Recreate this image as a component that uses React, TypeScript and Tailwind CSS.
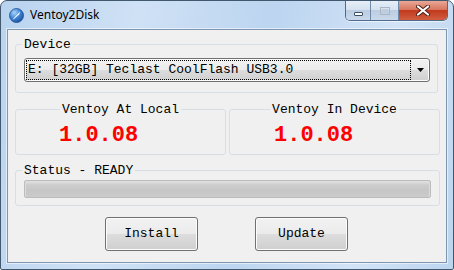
import React from "react";

const mono = "font-['Liberation_Mono','Courier_New',monospace]";
const btnFace =
  "bg-[linear-gradient(#f2f2f2_0%,#ebebeb_49%,#dddddd_50%,#cfcfcf_100%)] shadow-[inset_0_0_0_1px_#fcfcfc]";

function AppIcon() {
  return (
    <svg width="15" height="15" viewBox="0 0 15 15">
      <defs>
        <radialGradient id="ball" cx="0.35" cy="0.3" r="0.8">
          <stop offset="0" stopColor="#a9d3fa" />
          <stop offset="0.5" stopColor="#3f86d6" />
          <stop offset="1" stopColor="#17489a" />
        </radialGradient>
      </defs>
      <circle cx="7.5" cy="7.5" r="7" fill="url(#ball)" stroke="#1d4f8f" strokeWidth="0.8" />
      <path d="M3.5 11.5 L11.2 3.6 L10.2 6.2 L5 11 Z" fill="#ffffff" />
    </svg>
  );
}

function CaptionButtons() {
  return (
    <div className="flex h-[20px] self-start mr-[5px] border border-t-0 border-[#4f6b8c] rounded-b-[5px] overflow-hidden shadow-[0_1px_0_rgba(255,255,255,0.6)]">
      <div className="w-[25px] flex items-end justify-center pb-[4px] border-r border-[#6f89a8] bg-[linear-gradient(#e6eef8_0%,#d6e2f0_45%,#bccde2_50%,#c9d8ea_100%)]">
        <div className="w-[9px] h-[4px] bg-white border border-[#3b4f66] rounded-[1px]" />
      </div>
      <div className="w-[28px] flex items-center justify-center border-r border-[#6f89a8] bg-[linear-gradient(#e6eef8_0%,#d6e2f0_45%,#bccde2_50%,#c9d8ea_100%)]">
        <div className="w-[10px] h-[8px] border border-[#a9b6c5] flex items-center justify-center">
          <div className="w-[6px] h-[4px] border border-[#c3ccd6]" />
        </div>
      </div>
      <div className="w-[48px] flex items-center justify-center bg-[linear-gradient(#e9a898_0%,#d8765f_45%,#c2391c_50%,#d25e42_100%)]">
        <svg width="14" height="11" viewBox="0 0 14 11">
          <path d="M2 1.5 L12 9.5 M12 1.5 L2 9.5" stroke="#4a2018" strokeWidth="4" strokeLinecap="round" />
          <path d="M2 1.5 L12 9.5 M12 1.5 L2 9.5" stroke="#ffffff" strokeWidth="2.2" strokeLinecap="round" />
        </svg>
      </div>
    </div>
  );
}

// win7 style group box; padding goes on the inner div so the legend stays put
function Group({
  title,
  center,
  className,
  bodyClass,
  children,
}: {
  title: string;
  center?: boolean;
  className: string;
  bodyClass: string;
  children: React.ReactNode;
}) {
  return (
    <fieldset className={`border border-[#d5dfe5] rounded-[3px] ${className}`}>
      <legend className={`px-[2px] text-[13px] leading-[13px] text-black ${center ? "mx-auto" : "ml-[6px]"}`}>
        {title}
      </legend>
      <div className={bodyClass}>{children}</div>
    </fieldset>
  );
}

export default function App() {
  return (
    <div className="w-[454px] h-[270px] flex flex-col border border-[#41586f] rounded-t-[7px] rounded-b-[2px] bg-[linear-gradient(100deg,#b9d3ef_0%,#cfe1f5_28%,#bcd5f0_55%,#d2e3f6_80%,#bcd5ef_100%)]">
      <div className="h-[28px] flex shrink-0">
        <div className="flex items-center pl-[8px] gap-[6px]">
          <AppIcon />
          <span className="text-[12px] text-black font-['Noto_Sans','Open_Sans',sans-serif]">Ventoy2Disk</span>
        </div>
        <div className="ml-auto flex">
          <CaptionButtons />
        </div>
      </div>
      <div className="flex-1 px-[6px] pb-[6px] flex">
        <div className={`flex-1 flex flex-col bg-[#f0f0f0] border border-[#7f96b0] pl-[7px] pr-[6px] shadow-[0_0_0_1px_rgba(255,255,255,0.55)] ${mono}`}>
          <Group title="Device" className="mt-[8px] w-[423px]" bodyClass="pt-[7px] pb-[10px] pl-[8px] pr-[7px]">
            <div className={`h-[24px] flex items-stretch border border-[#707070] rounded-[3px] ${btnFace}`}>
              <div className="flex-1 m-[1px] mr-0 border border-dotted border-black flex items-center pl-[1px] text-[13px] text-black whitespace-nowrap">
                E: [32GB] Teclast CoolFlash USB3.0
              </div>
              <div className="w-[18px] flex items-center justify-center">
                <svg width="7" height="4" viewBox="0 0 7 4">
                  <path d="M0 0 H7 L3.5 4 Z" fill="#000" />
                </svg>
              </div>
            </div>
          </Group>
          <div className="mt-[10px] flex gap-[3px]">
            <Group title="Ventoy At Local" center className="w-[211px]" bodyClass="pt-[9px] pb-[7px] pl-[43px]">
              <div className="text-[22px] leading-[22px] font-bold text-[#ff0000]">1.0.08</div>
            </Group>
            <Group title="Ventoy In Device" center className="w-[211px]" bodyClass="pt-[9px] pb-[7px] pl-[44px]">
              <div className="text-[22px] leading-[22px] font-bold text-[#ff0000]">1.0.08</div>
            </Group>
          </div>
          <Group title="Status - READY" className="mt-[9px] w-[425px]" bodyClass="pt-[3px] pb-[7px] px-[8px]">
            <div className="h-[18px] border border-[#bcbcbc] rounded-[2px] bg-[linear-gradient(#e2e2e2_0%,#cdcdcd_25%,#c6c6c6_60%,#cbcbcb_100%)] shadow-[inset_1px_0_0_#dcdcdc,inset_-1px_0_0_#dcdcdc]" />
          </Group>
          <div className="mt-[11px] flex pl-[90px] gap-[57px]">
            <button className={`w-[93px] h-[34px] border border-[#707070] rounded-[3px] text-[13px] text-black ${btnFace}`}>
              Install
            </button>
            <button className={`w-[93px] h-[34px] border border-[#707070] rounded-[3px] text-[13px] text-black ${btnFace}`}>
              Update
            </button>
          </div>
        </div>
      </div>
    </div>
  );
}
